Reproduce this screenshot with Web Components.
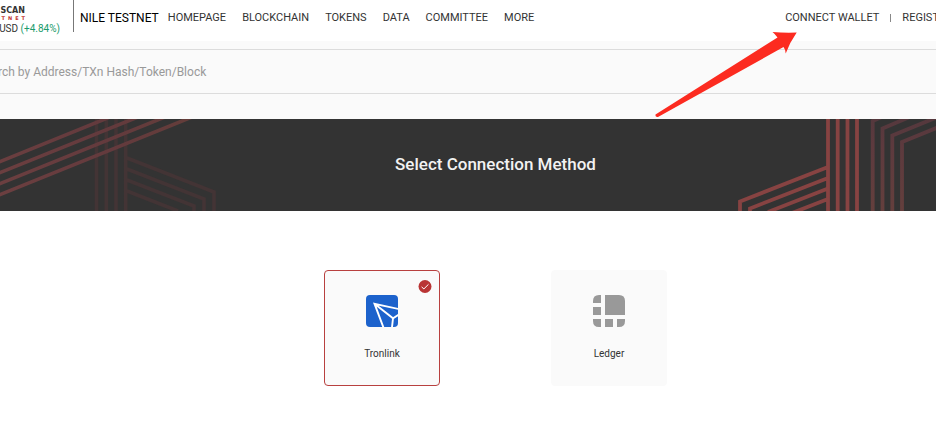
<!DOCTYPE html>
<html lang="en">
<head>
<meta charset="utf-8">
<title>Select Connection Method</title>
<style>
  html, body { margin: 0; }
  body {
    font-family: Roboto, "Liberation Sans", Arial, sans-serif;
    font-size: 11px;
    line-height: 16px;
    color: #333;
    background: #fff;
    overflow-x: hidden;
  }
</style>
</head>
<body>
<wallet-page></wallet-page>

<script>
function define(name, html, connected) {
  const template = document.createElement('template');
  template.innerHTML = html;
  customElements.define(name, class extends HTMLElement {
    constructor() {
      super();
      this.attachShadow({ mode: 'open' }).append(template.content.cloneNode(true));
    }
    connectedCallback() {
      if (connected) connected(this);
    }
  });
}

define('scan-logo', `
  <style>
    :host { display: flex; flex-direction: column; align-items: flex-end; justify-content: flex-end; box-sizing: border-box; width: 60px; height: 37px; white-space: nowrap; }
    .name { display: flex; flex-direction: column; align-items: flex-end; padding-right: 35px; font-size: 8px; line-height: 8px; font-weight: 700; color: #333; font-family: "DejaVu Sans", sans-serif; }
    .net { font-size: 5px; line-height: 6px; color: #c23631; letter-spacing: 3px; margin-right: -3px; }
    .price { line-height: 16px; font-size: 10px; color: #333; }
    .up { color: #1a9b6c; }
  </style>
  <div class="name"><span>SCAN</span><span class="net">TNET</span></div>
  <div class="price">USD <span class="up">(+4.84%)</span></div>
`);

define('nav-link', `
  <style>
    :host { display: block; }
    a { color: inherit; text-decoration: none; white-space: nowrap; }
  </style>
  <a href="#"><slot></slot></a>
`);

define('site-header', `
  <style>
    :host { display: flex; height: 41px; background: #fff; overflow: hidden; }
    .brand { display: flex; padding-right: 13px; height: 32px; border-right: 1px solid #777; }
    .network { padding: 10px 9px 0 6px; font-size: 12px; color: #000; white-space: nowrap; }
    nav { display: flex; gap: 16px; padding-top: 10px; }
    .account { display: flex; gap: 11px; padding-top: 10px; margin-left: auto; margin-right: -16px; }
    .bar { width: 1px; height: 8px; margin-top: 4px; background: #888; }
  </style>
  <div class="brand"><scan-logo></scan-logo></div>
  <div class="network">NILE TESTNET</div>
  <nav>
    <nav-link>HOMEPAGE</nav-link>
    <nav-link>BLOCKCHAIN</nav-link>
    <nav-link>TOKENS</nav-link>
    <nav-link>DATA</nav-link>
    <nav-link>COMMITTEE</nav-link>
    <nav-link>MORE</nav-link>
  </nav>
  <div class="account">
    <nav-link>CONNECT WALLET</nav-link>
    <span class="bar"></span>
    <nav-link>REGISTER</nav-link>
  </div>
`);

define('search-band', `
  <style>
    :host { display: block; padding: 8px 0 25px; background: #fafafa; overflow: hidden; }
    input { display: block; box-sizing: border-box; width: calc(100% + 40px); height: 45px; margin: 0 0 0 -22px; padding: 0; border: solid #dcdcdc; border-width: 1px 0; background: #fafafa; font: inherit; font-size: 12px; outline: 0; }
    input::placeholder { color: #999; opacity: 1; }
  </style>
  <input type="text" aria-label="Search" placeholder="Search by Address/TXn Hash/Token/Block">
`);

define('page-banner', `
  <style>
    :host { display: grid; grid-template-columns: 216px 1fr 216px; height: 92px; background: #333; overflow: hidden; }
    svg { display: block; width: 216px; height: 92px; fill: none; }
    h1 { margin: 0; padding: 33px 0 0 55px; font-size: 17px; line-height: 24px; font-weight: 500; text-align: center; color: #f2f2f2; white-space: nowrap; }
  </style>
  <svg viewBox="0 0 216 92" aria-hidden="true">
    <defs><linearGradient id="d" gradientUnits="userSpaceOnUse" x1="0" y1="80" x2="190" y2="0">
      <stop offset="0" stop-color="#6c3f40"/><stop offset=".6" stop-color="#633a3d"/><stop offset="1" stop-color="#643d3a"/></linearGradient></defs>
    <path stroke="#433435" stroke-width="3.6" d="M96.5 0V92M106.3 0V92M116 0V92M125.7 0V92M127 39L214 73V92M127 50L204 80V92M127 61L194 87V92M127 72L178 92"/>
    <path stroke="url(#d)" stroke-width="3.6" d="M-2 43.4L110-2M-2 54.4L138-2M-2 65.4L165-2M-2 76.4L192-2"/>
  </svg>
  <h1><slot></slot></h1>
  <svg viewBox="0 0 216 92" aria-hidden="true">
    <defs><linearGradient id="v" gradientUnits="userSpaceOnUse" x1="0" y1="0" x2="0" y2="92">
      <stop offset="0" stop-color="#55383d"/><stop offset=".3" stop-color="#5d3a3e"/><stop offset="1" stop-color="#643f3d"/></linearGradient></defs>
    <path stroke="#874342" stroke-width="3.8" d="M108 0V92M117.7 0V92M127.5 0V92M137 0V92M108 48L20 82.5V92M108 59L30 89.5V92M108 69.500L48 93M108 80L72 94"/>
    <path stroke="url(#v)" stroke-width="3.8" d="M152.700 92V2L164-3M162.500 92V9.500L192-3M172.300 92V16.500L220-3M182 92V23L220 7.500"/>
  </svg>
`);

define('method-card', `
  <style>
    :host { display: block; }
    label { position: relative; display: flex; flex-direction: column; align-items: center; box-sizing: border-box; width: 116px; height: 116px; padding-top: 24px; border: 1px solid #fafafa; border-radius: 4px; background: #fafafa; cursor: pointer; }
    input { position: absolute; inset: 0; width: 100%; height: 100%; margin: 0; opacity: 0; cursor: pointer; }
    .name { margin-top: 19px; font-size: 10px; line-height: 16px; color: #333; }
    .tick { position: absolute; top: 9px; right: 7px; width: 14px; height: 14px; display: none; }
    :host([selected]) label { border-color: #b8403f; }
    :host([selected]) .tick { display: block; }
  </style>
  <label>
    <input type="radio" name="method">
    <slot name="icon"></slot>
    <span class="name"><slot></slot></span>
    <svg class="tick" viewBox="0 0 14 14" aria-hidden="true"><circle cx="7" cy="6.500" r="6.500" fill="#b93434"/><path d="M3.600 6.900L5.900 8.900L10.500 4.300" fill="none" stroke="#fff" stroke-width="1"/></svg>
  </label>
`, card => {
  const radio = card.shadowRoot.querySelector('input');
  radio.checked = card.hasAttribute('selected');
  radio.addEventListener('change', () => {
    for (const other of card.parentNode.querySelectorAll('method-card')) {
      other.toggleAttribute('selected', other === card);
      other.shadowRoot.querySelector('input').checked = other === card;
    }
  });
});

define('tronlink-icon', `
  <style>:host, svg { display: block; width: 32px; height: 32px; }</style>
  <svg viewBox="0 0 32 32" aria-hidden="true">
    <defs><clipPath id="c"><rect width="32" height="32" rx="4"/></clipPath></defs>
    <g clip-path="url(#c)">
      <rect width="32" height="32" fill="#1c62cc"/>
      <path d="M34 14.300L8.500 8.700L18 34M8.500 8.700L27 23.300L34 19M27 23.300L25.800 34" fill="none" stroke="#fff" stroke-width="1.900"/>
    </g>
  </svg>
`);

define('ledger-icon', `
  <style>:host, svg { display: block; width: 32px; height: 32px; }</style>
  <svg viewBox="0 0 32 32" fill="#999" aria-hidden="true">
    <path d="M12 0H26Q32 0 32 6V20H12ZM6 0H8V8H0V6Q0 0 6 0ZM0 12H8V20H0ZM0 24H8V32H6Q0 32 0 26ZM12 24H20V32H12ZM24 24H32V26Q32 32 26 32H24Z"/>
  </svg>
`);

define('method-list', `
  <style>
    :host { display: flex; justify-content: center; gap: 111px; padding: 59px 0 50px 55px; }
  </style>
  <slot></slot>
`);

define('pointer-arrow', `
  <style>
    :host { position: absolute; top: 30px; right: 136px; width: 146px; height: 90px; pointer-events: none; }
    svg { display: block; }
  </style>
  <svg width="146" height="90" viewBox="0 0 146 90" aria-hidden="true">
    <path fill="#fc2b20" d="M1.500 84.500L123.500 7.500Q121 4 118.500 2Q131 3 142.700 2.500Q136 12 131.700 23.500Q131.500 19.500 129.500 17L4 87Q1 87.500 1.500 84.500Z"/>
  </svg>
`);

define('wallet-page', `
  <style>
    :host { display: block; position: relative; overflow: hidden; }
  </style>
  <site-header></site-header>
  <search-band></search-band>
  <page-banner>Select Connection Method</page-banner>
  <method-list>
    <method-card selected><tronlink-icon slot="icon"></tronlink-icon>Tronlink</method-card>
    <method-card><ledger-icon slot="icon"></ledger-icon>Ledger</method-card>
  </method-list>
  <pointer-arrow></pointer-arrow>
`);
</script>
</body>
</html>
